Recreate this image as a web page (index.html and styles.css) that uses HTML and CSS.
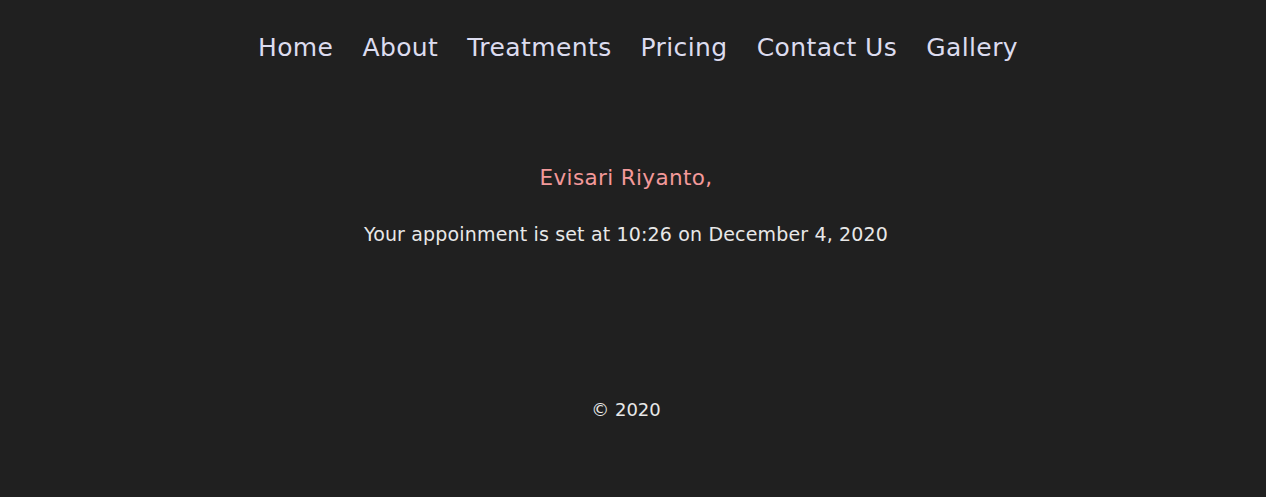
FILE: index.html
```html
<!DOCTYPE html>
<html>
<head>
<meta charset="utf-8">
<link rel="stylesheet" href="styles.css">
</head>
<body>
<nav class="nav">
  <a class="nav-link" href="#">Home</a>
  <a class="nav-link" href="#">About</a>
  <a class="nav-link" href="#">Treatments</a>
  <a class="nav-link" href="#">Pricing</a>
  <a class="nav-link" href="#">Contact Us</a>
  <a class="nav-link" href="#">Gallery</a>
</nav>
<main class="content">
  <h2 class="name">Evisari Riyanto,</h2>
  <p class="message">Your appoinment is set at 10:26 on December 4, 2020</p>
</main>
<footer class="footer">© 2020</footer>
</body>
</html>
```
FILE: styles.css
```css
html, body {
  margin: 0;
  padding: 0;
  background: #202020;
  height: 100%;
}
body {
  font-family: "DejaVu Sans", sans-serif;
  color: #e6e6e6;
}
.nav {
  display: flex;
  justify-content: center;
  gap: 29px;
  padding: 29px 0 0 10px;
  height: 36px;
  align-items: center;
}
.nav-link {
  color: #dcdcef;
  text-decoration: none;
  font-size: 25px;
  letter-spacing: 0.4px;
}
.content {
  display: flex;
  flex-direction: column;
  align-items: center;
  padding: 98px 14px 0 0;
}
.name {
  margin: 0;
  font-weight: normal;
  font-size: 21.5px;
  color: #f3999a;
  height: 30px;
  line-height: 30px;
  letter-spacing: 0.35px;
}
.message {
  margin: 29px 0 0;
  font-size: 19px;
  line-height: 24px;
  color: #e8e8e8;
  letter-spacing: 0.16px;
}
.footer {
  text-align: center;
  font-size: 18px;
  color: #e8e8e8;
  margin-top: 152px;
  padding-right: 14px;
  line-height: 24px;
}
```
